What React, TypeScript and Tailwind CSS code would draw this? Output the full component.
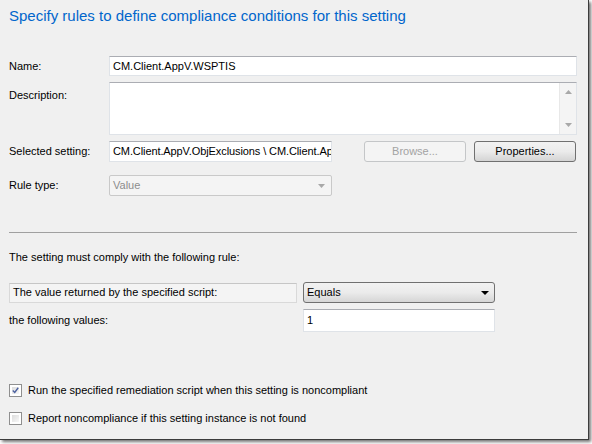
import React from "react";

function TextBox({ value, className = "" }: { value?: string; className?: string }) {
  return (
    <div
      className={`flex items-center overflow-hidden whitespace-nowrap bg-white border border-[#dfe3e8] border-t-[#abadb3] pl-[3px] ${className}`}
    >
      {value}
    </div>
  );
}

function CheckRow({ checked, label }: { checked?: boolean; label: string }) {
  return (
    <div className="flex items-center h-[14px]">
      <div className="w-[13px] h-[13px] border border-[#8f8f8f] bg-white p-[2px] flex items-center justify-center">
        <div className="w-full h-full bg-gradient-to-br from-[#dcdcdc] to-[#f8f8f8] flex items-center justify-center">
          {checked && (
            <svg width="9" height="9" viewBox="0 0 9 9">
              <path d="M1 4.5 L3.5 7 L8 1" fill="none" stroke="#4c61a0" strokeWidth="1.8" />
            </svg>
          )}
        </div>
      </div>
      <span className="ml-[6px]">{label}</span>
    </div>
  );
}

export default function App() {
  return (
    <div className="w-[592px] h-[444px] bg-white font-['Liberation_Sans',Arial,sans-serif] text-[11px] text-black">
      <div className="w-[589px] h-[440px] bg-[#f0f0f0] border-r border-b border-[#3c3c3c] shadow-[2px_2px_3px_rgba(0,0,0,0.55)] px-[9px] flex flex-col">
        {/* Heading */}
        <div className="pt-[6px] text-[15px] leading-[20px] text-[#0066cc]">
          Specify rules to define compliance conditions for this setting
        </div>

        {/* Name */}
        <div className="flex mt-[30px] h-[20px]">
          <div className="w-[100px] flex items-center">Name:</div>
          <TextBox value="CM.Client.AppV.WSPTIS" className="w-[468px] h-[20px]" />
        </div>

        {/* Description */}
        <div className="flex mt-[6px]">
          <div className="w-[100px] pt-[5px]">Description:</div>
          <div className="w-[468px] h-[53px] bg-white border border-[#dfe3e8] border-t-[#abadb3] flex justify-end">
            <div className="w-[17px] h-full bg-[#f4f4f4] border-l border-[#e8e8e8] flex flex-col items-center justify-between py-[7px]">
              <svg width="7" height="4" viewBox="0 0 7 4"><path d="M0 4 L3.5 0 L7 4 Z" fill="#a8a8a8" /></svg>
              <svg width="7" height="4" viewBox="0 0 7 4"><path d="M0 0 L3.5 4 L7 0 Z" fill="#a8a8a8" /></svg>
            </div>
          </div>
        </div>

        {/* Selected setting */}
        <div className="flex items-center mt-[6px] h-[21px]">
          <div className="w-[100px]">Selected setting:</div>
          <TextBox
            value="CM.Client.AppV.ObjExclusions \ CM.Client.Ap"
            className="w-[223px] h-[21px] border-[#dcdcdc] tracking-[-0.1px]"
          />
          <div className="ml-[32px] w-[102px] h-[21px] rounded-[3px] border border-[#c4c6c8] bg-[#f4f4f4] text-[#a3a3a3] flex items-center justify-center">
            Browse...
          </div>
          <div className="ml-[8px] w-[102px] h-[21px] rounded-[3px] border border-[#707070] bg-gradient-to-b from-[#f2f2f2] via-[#ebebeb] to-[#d4d4d4] flex items-center justify-center">
            Properties...
          </div>
        </div>

        {/* Rule type */}
        <div className="flex items-center mt-[13px] h-[21px]">
          <div className="w-[100px]">Rule type:</div>
          <div className="w-[223px] h-[21px] rounded-[2px] border border-[#c9c9c9] bg-[#f4f4f4] text-[#8d8d8d] flex items-center justify-between pl-[3px] pr-[6px]">
            <span>Value</span>
            <svg width="7" height="4" viewBox="0 0 7 4"><path d="M0 0 L3.5 4 L7 0 Z" fill="#a8a8a8" /></svg>
          </div>
        </div>

        {/* Separator */}
        <div className="mt-[36px] w-[568px] h-px bg-[#a0a0a0]" />

        <div className="mt-[18px] leading-[13px]">The setting must comply with the following rule:</div>

        {/* Operator row */}
        <div className="flex items-center mt-[18px]">
          <div className="w-[288px] h-[20px] border border-[#d9d9d9] border-t-[#c6c6c6] bg-[#f4f4f4] flex items-center pl-[3px]">
            The value returned by the specified script:
          </div>
          <div className="ml-[6px] w-[192px] h-[21px] rounded-[3px] border border-[#707070] bg-gradient-to-b from-[#f2f2f2] via-[#ebebeb] to-[#d6d6d6] flex items-center justify-between pl-[3px] pr-[5px]">
            <span>Equals</span>
            <svg width="8" height="4" viewBox="0 0 8 4"><path d="M0 0 L4 4 L8 0 Z" fill="#000" /></svg>
          </div>
        </div>

        {/* Values row */}
        <div className="flex items-center mt-[6px] h-[23px]">
          <div className="w-[294px]">the following values:</div>
          <TextBox value="1" className="w-[192px] h-[23px]" />
        </div>

        {/* Checkboxes */}
        <div className="mt-[51px] flex flex-col gap-[14px]">
          <CheckRow checked label="Run the specified remediation script when this setting is noncompliant" />
          <CheckRow label="Report noncompliance if this setting instance is not found" />
        </div>
      </div>
    </div>
  );
}
